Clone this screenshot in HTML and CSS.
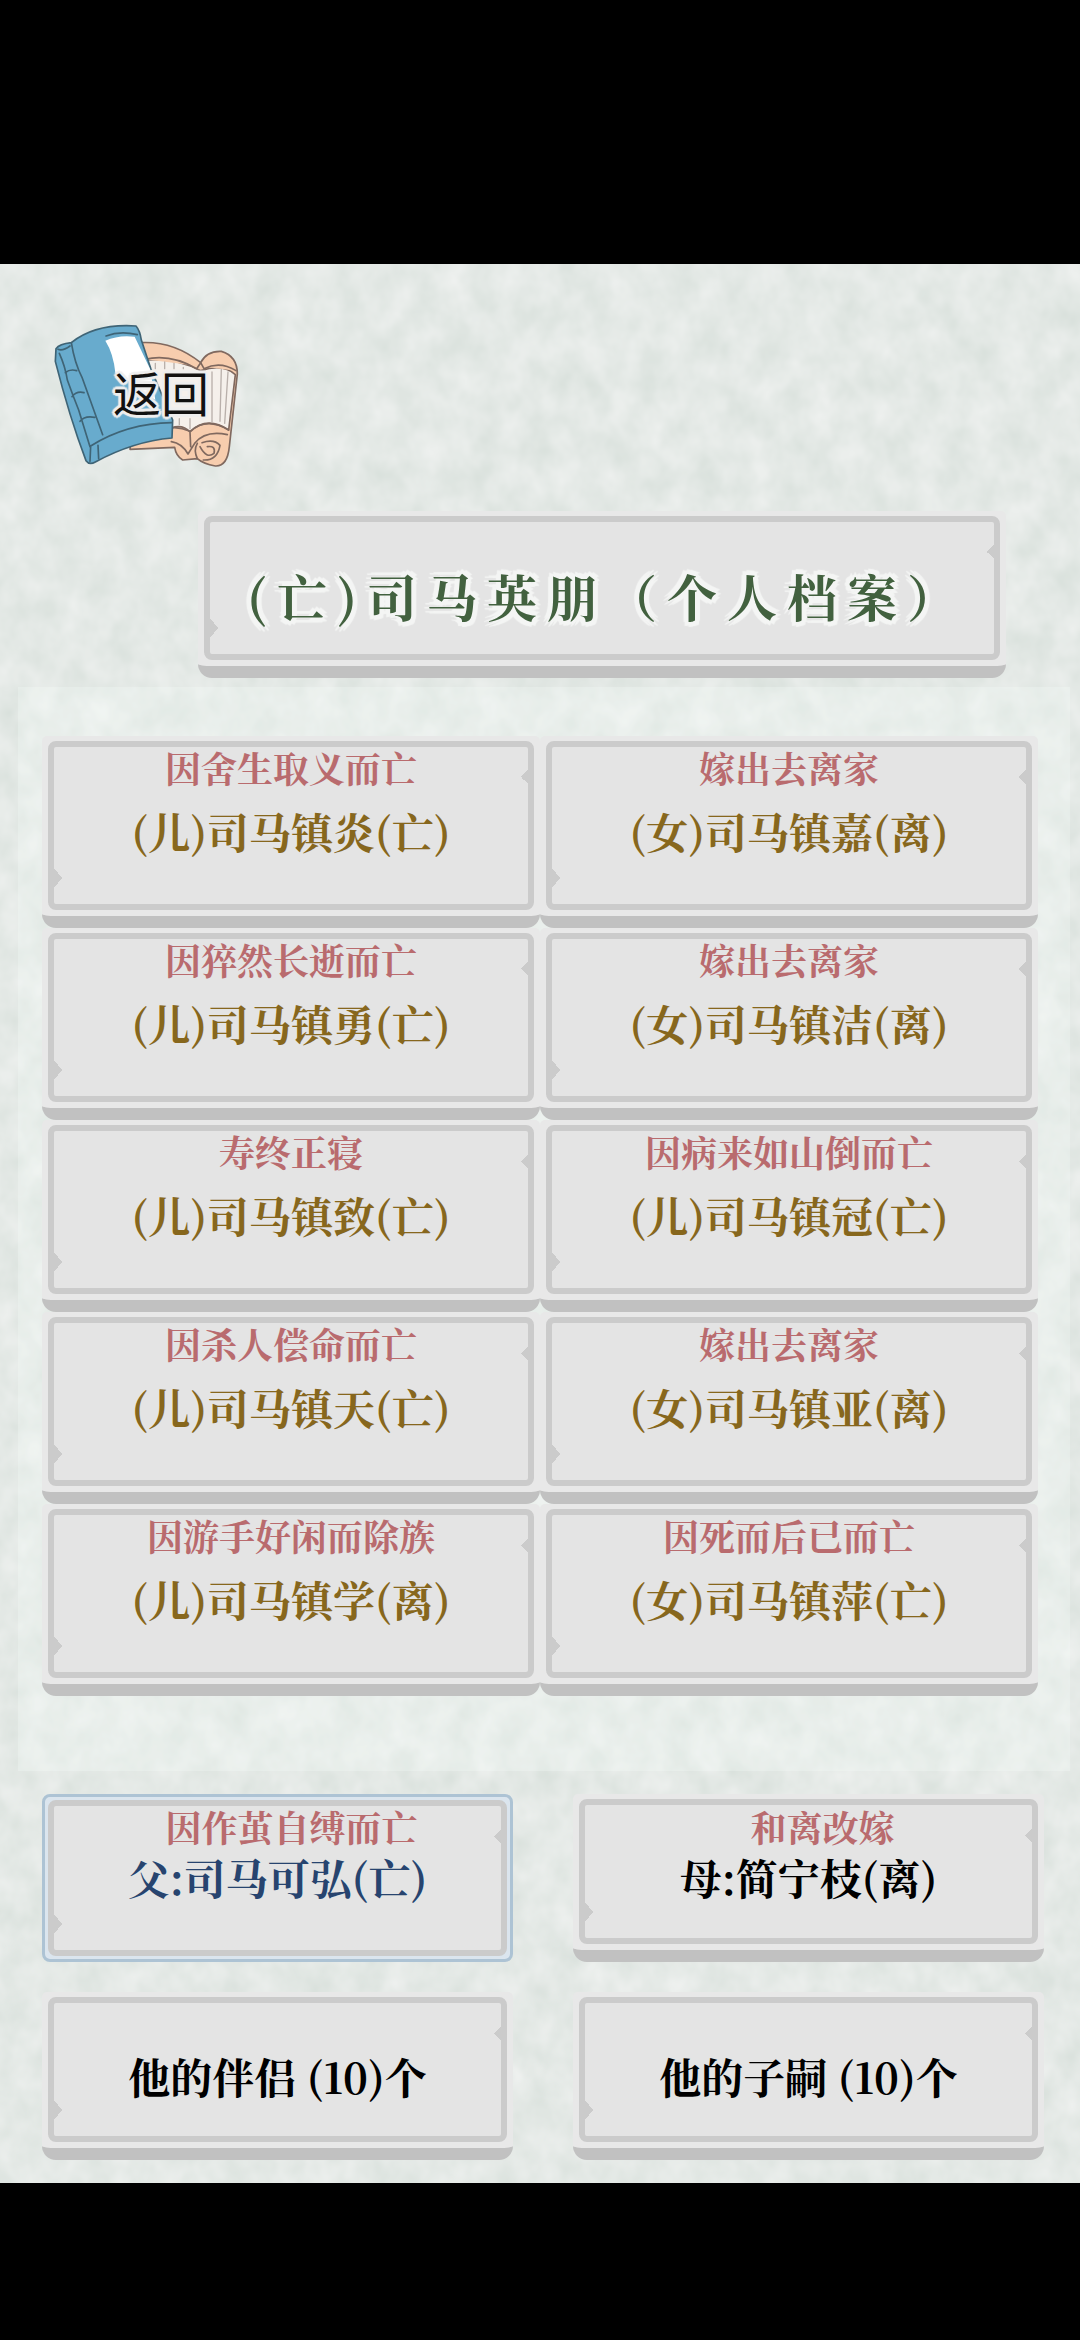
FILE: index.html
```html
<!DOCTYPE html>
<html lang="zh-CN">
<head>
<meta charset="utf-8">
<meta name="viewport" content="width=device-width, initial-scale=1">
<title>个人档案</title>
<link rel="stylesheet" href="styles.css">
</head>
<body>
<main class="paper">
  <svg class="texture" aria-hidden="true">
    <filter id="fibre" x="0" y="0" width="100%" height="100%" color-interpolation-filters="sRGB">
      <feTurbulence type="fractalNoise" baseFrequency="0.036 0.03" numOctaves="3" seed="7"/>
      <feColorMatrix values="0.1 0 0 0 0.844  0.075 0 0 0 0.876  0.09 0 0 0 0.856  0 0 0 0 1"/>
    </filter>
    <rect width="100%" height="100%" filter="url(#fibre)"/>
  </svg>

  <button class="back" type="button">
    <svg class="book" viewBox="36 42 600 492" aria-hidden="true">
      <g stroke="#80695f" stroke-width="5" stroke-linejoin="round" stroke-linecap="round">
        <path d="M330 128 Q430 122 512 188 Q530 152 574 154 Q622 168 622 222 L598 440 Q592 500 556 498 Q520 492 502 476 L458 480 Q438 468 434 442 L300 448 Z" fill="#f7cdae"/>
        <path d="M345 180 Q440 172 512 212 Q580 190 616 224 L596 390 Q530 350 480 394 Q450 380 420 384 Z" fill="#f5f0eb"/>
        <path d="M345 178 Q420 160 500 206 L512 188 L522 206 Q570 182 618 212" fill="#f7cdae"/>
        <path d="M424 384 Q458 372 480 396 Q530 346 596 390 M424 425 Q456 430 474 462 L494 430 Q526 390 592 404 M480 396 L482 440 M502 476 Q490 450 502 430 M510 440 Q530 478 552 460 Q558 436 532 440 M520 480 Q562 482 570 436 Q552 416 516 428" fill="none"/>
        <path d="M376 190 V206 M404 186 V206 M432 190 V206 M460 202 V206 M546 216 V366 M574 208 L570 364 M594 216 L584 370 M448 356 V374 M480 356 V386" fill="none" stroke="#b9b0ab" stroke-width="4"/>
      </g>
      <g stroke="#3f6476" stroke-width="5" stroke-linejoin="round" stroke-linecap="round">
        <path d="M78 146 Q88 132 124 128 Q196 70 318 78 Q330 92 334 120 L362 205 L428 360 L426 414 Q310 424 196 486 Q178 496 168 482 Q118 350 76 184 Z" fill="#68abcd"/>
        <path d="M124 128 Q134 190 156 232 L218 404 M84 148 Q98 154 120 138 M88 160 Q106 200 112 240 Q130 290 146 330 L180 440 M106 218 Q120 206 140 212 M126 290 Q140 272 162 278 M150 364 Q164 346 194 352 M180 484 L182 438 Q290 370 426 368 M206 476 L204 436 M228 108 Q270 92 322 104" fill="none"/>
      </g>
      <path d="M226 122 Q266 104 314 110 L360 206 L376 300 L290 240 L256 218 Q250 160 226 122 Z" fill="#fff"/>
    </svg>
    <span class="back-label">返回</span>
  </button>

  <h1 class="panel title">(亡)司马英朋（个人档案）</h1>

  <section class="children" aria-label="子嗣">
    <button class="panel" type="button"><span class="fate">因舍生取义而亡</span><span class="name">(儿)司马镇炎(亡)</span></button>
    <button class="panel" type="button"><span class="fate">嫁出去离家</span><span class="name">(女)司马镇嘉(离)</span></button>
    <button class="panel" type="button"><span class="fate">因猝然长逝而亡</span><span class="name">(儿)司马镇勇(亡)</span></button>
    <button class="panel" type="button"><span class="fate">嫁出去离家</span><span class="name">(女)司马镇洁(离)</span></button>
    <button class="panel" type="button"><span class="fate">寿终正寝</span><span class="name">(儿)司马镇致(亡)</span></button>
    <button class="panel" type="button"><span class="fate">因病来如山倒而亡</span><span class="name">(儿)司马镇冠(亡)</span></button>
    <button class="panel" type="button"><span class="fate">因杀人偿命而亡</span><span class="name">(儿)司马镇天(亡)</span></button>
    <button class="panel" type="button"><span class="fate">嫁出去离家</span><span class="name">(女)司马镇亚(离)</span></button>
    <button class="panel" type="button"><span class="fate">因游手好闲而除族</span><span class="name">(儿)司马镇学(离)</span></button>
    <button class="panel" type="button"><span class="fate">因死而后已而亡</span><span class="name">(女)司马镇萍(亡)</span></button>
  </section>

  <section class="family" aria-label="亲属">
    <button class="panel parent selected" type="button"><span class="fate">因作茧自缚而亡</span><span class="name">父:司马可弘(亡)</span></button>
    <button class="panel parent" type="button"><span class="fate">和离改嫁</span><span class="name">母:简宁枝(离)</span></button>
    <button class="panel link" type="button">他的伴侣 (10)个</button>
    <button class="panel link" type="button">他的子嗣 (10)个</button>
  </section>
</main>
</body>
</html>
```
FILE: styles.css
```css
* {
  box-sizing: border-box;
}

body {
  margin: 0;
  padding: 264px 0 157px;
  background: #000;
  font-family: "Noto Serif CJK SC", "Noto Sans CJK SC", serif;
}

button {
  appearance: none;
  border: 0;
  padding: 0;
  background: none;
  color: inherit;
  font: inherit;
  cursor: pointer;
}

.paper {
  position: relative;
  display: flex;
  flex-direction: column;
  padding: 50px 36px 23px 42px;
  background: #e6ebe7;
}

.texture {
  position: absolute;
  inset: 0;
  width: 100%;
  height: 100%;
}

.back {
  position: relative;
  align-self: flex-start;
  display: grid;
  place-items: center;
  width: 200px;
  height: 164px;
}

.book,
.back-label {
  grid-area: 1 / 1;
}

.book {
  width: 100%;
  height: 100%;
}

.back-label {
  position: relative;
  padding: 0 0 10px 38px;
  color: #111;
  font-family: "Noto Sans CJK SC", sans-serif;
  font-size: 48px;
  font-weight: 400;
  line-height: 64px;
  text-shadow:
    3px 0 1px #eee, -3px 0 1px #eee, 0 3px 1px #eee, 0 -3px 1px #eee,
    2px 2px 1px #eee, -2px 2px 1px #eee, 2px -2px 1px #eee, -2px -2px 1px #eee;
}

/* Stone plate: pale rim, grey inner frame with two chips, thick lower edge */
.panel {
  position: relative;
  display: flex;
  flex-direction: column;
  align-items: center;
  margin: 0;
  padding: 10px 12px 24px;
  border-bottom: 12px solid #c1c1c1;
  border-radius: 5px 5px 14px 14px;
  background: #e8e8e8;
  color: #000;
  font-size: 42px;
  font-weight: 700;
  white-space: nowrap;
}

.panel::before {
  content: "";
  position: absolute;
  inset: 5px 6px 6px;
  border: 6px solid #cbcbcb;
  border-radius: 8px;
  background:
    conic-gradient(from 219deg at 100% 50%, #cbcbcb 102deg, transparent 0) left 0 bottom 16px / 8px 20px no-repeat,
    conic-gradient(from 45deg at 0 50%, #cbcbcb 90deg, transparent 0) right 0 top 23px / 7px 14px no-repeat,
    #e4e4e4;
}

.title {
  margin: 33px 38px 0 156px;
  padding: 12px 0 0 10px;
  height: 167px;
  justify-content: center;
  isolation: isolate;
  color: #42613f;
  font-size: 50px;
  letter-spacing: 10px;
  line-height: 64px;
  text-shadow:
    5px 0 1px #f4f5f4, -5px 0 1px #f4f5f4, 0 5px 1px #f4f5f4, 0 -5px 1px #f4f5f4,
    4px 4px 1px #f4f5f4, -4px 4px 1px #f4f5f4, 4px -4px 1px #f4f5f4, -4px -4px 1px #f4f5f4;
}

.title::before,
.link::before {
  z-index: -1;
}

.panel > span {
  position: relative;
}

.children {
  position: relative;
  display: grid;
  grid-template-columns: 1fr 1fr;
  margin: 9px -26px 0 -24px;
  padding: 49px 32px 75px 24px;
  background: rgba(248, 255, 250, 0.25);
}

.children .panel {
  height: 192px;
}

.fate {
  color: #b96b6e;
  font-size: 36px;
  line-height: 44px;
}

.name {
  margin-top: 15px;
  color: #87671d;
  line-height: 52px;
}

.family {
  position: relative;
  display: grid;
  grid-template-columns: 1fr 1fr;
  gap: 30px 60px;
  margin-top: 23px;
}

.family .panel {
  height: 168px;
}

.family .parent {
  padding-top: 11px;
}

.parent .fate {
  padding-left: 28px;
}

.parent .name {
  margin-top: 2px;
  color: #000;
}

.family .selected {
  border: 3px solid #adc3d4;
  border-radius: 8px;
  padding-top: 8px;
  background: #dbe5ee;
}

.selected::before {
  inset: 3px;
}

.selected .name {
  color: #27446f;
}

.link {
  isolation: isolate;
  justify-content: center;
  line-height: 52px;
}

.family .link {
  padding: 12px 12px 0;
}
```
